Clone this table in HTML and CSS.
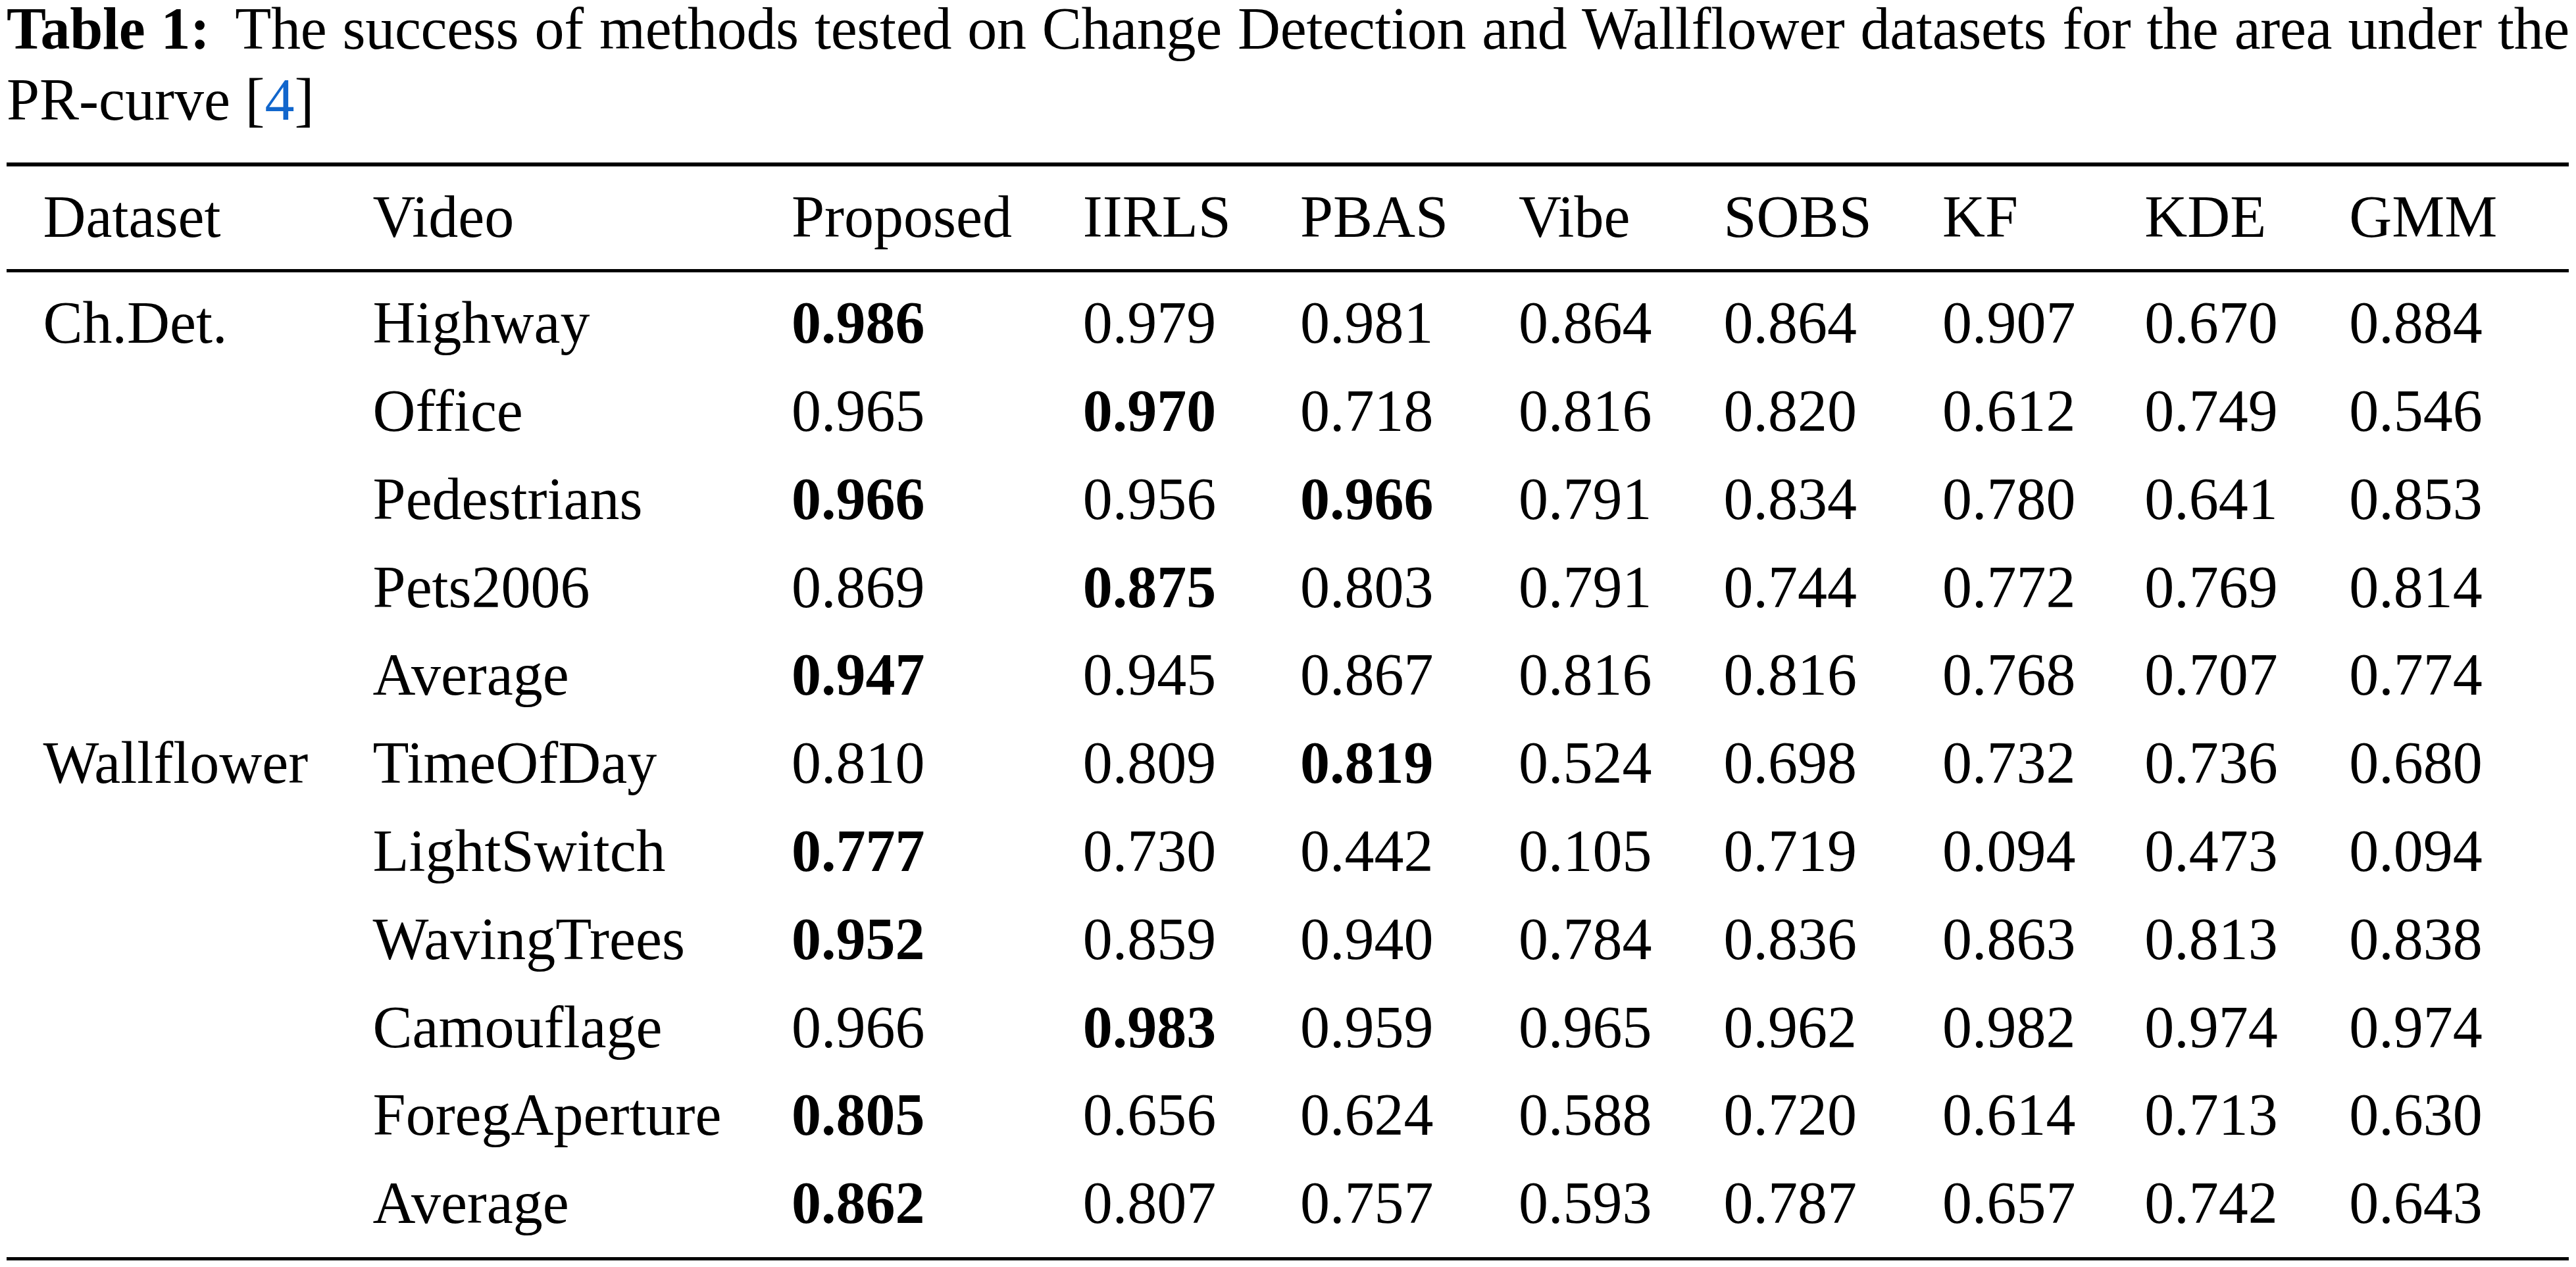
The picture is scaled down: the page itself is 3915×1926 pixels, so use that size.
FILE: index.html
```html
<!DOCTYPE html>
<html lang="en">
<head>
<meta charset="utf-8">
<title>Table 1</title>
<link rel="stylesheet" href="styles.css">
</head>
<body>
<div class="page">
  <p class="caption"><span class="line-full"><span class="label">Table 1:</span> The success of methods tested on Change Detection and Wallflower datasets for the area under the</span> PR-curve [<span class="cite">4</span>]</p>
  <table class="results">
    <colgroup>
      <col class="c1"><col class="c2"><col class="c3"><col class="c4"><col class="c5"><col class="c6"><col class="c7"><col class="c8"><col class="c9"><col class="c10">
    </colgroup>
    <thead>
      <tr>
        <th>Dataset</th><th>Video</th><th>Proposed</th><th>IIRLS</th><th>PBAS</th><th>Vibe</th><th>SOBS</th><th>KF</th><th>KDE</th><th>GMM</th>
      </tr>
    </thead>
    <tbody>
      <tr class="first"><td>Ch.Det.</td><td>Highway</td><td class="best">0.986</td><td>0.979</td><td>0.981</td><td>0.864</td><td>0.864</td><td>0.907</td><td>0.670</td><td>0.884</td></tr>
      <tr><td></td><td>Office</td><td>0.965</td><td class="best">0.970</td><td>0.718</td><td>0.816</td><td>0.820</td><td>0.612</td><td>0.749</td><td>0.546</td></tr>
      <tr><td></td><td>Pedestrians</td><td class="best">0.966</td><td>0.956</td><td class="best">0.966</td><td>0.791</td><td>0.834</td><td>0.780</td><td>0.641</td><td>0.853</td></tr>
      <tr><td></td><td>Pets2006</td><td>0.869</td><td class="best">0.875</td><td>0.803</td><td>0.791</td><td>0.744</td><td>0.772</td><td>0.769</td><td>0.814</td></tr>
      <tr><td></td><td>Average</td><td class="best">0.947</td><td>0.945</td><td>0.867</td><td>0.816</td><td>0.816</td><td>0.768</td><td>0.707</td><td>0.774</td></tr>
      <tr><td>Wallflower</td><td>TimeOfDay</td><td>0.810</td><td>0.809</td><td class="best">0.819</td><td>0.524</td><td>0.698</td><td>0.732</td><td>0.736</td><td>0.680</td></tr>
      <tr><td></td><td>LightSwitch</td><td class="best">0.777</td><td>0.730</td><td>0.442</td><td>0.105</td><td>0.719</td><td>0.094</td><td>0.473</td><td>0.094</td></tr>
      <tr><td></td><td>WavingTrees</td><td class="best">0.952</td><td>0.859</td><td>0.940</td><td>0.784</td><td>0.836</td><td>0.863</td><td>0.813</td><td>0.838</td></tr>
      <tr><td></td><td>Camouflage</td><td>0.966</td><td class="best">0.983</td><td>0.959</td><td>0.965</td><td>0.962</td><td>0.982</td><td>0.974</td><td>0.974</td></tr>
      <tr><td></td><td>ForegAperture</td><td class="best">0.805</td><td>0.656</td><td>0.624</td><td>0.588</td><td>0.720</td><td>0.614</td><td>0.713</td><td>0.630</td></tr>
      <tr class="last"><td></td><td>Average</td><td class="best">0.862</td><td>0.807</td><td>0.757</td><td>0.593</td><td>0.787</td><td>0.657</td><td>0.742</td><td>0.643</td></tr>
    </tbody>
  </table>
</div>
</body>
</html>
```
FILE: styles.css
```css
html, body {
  margin: 0;
  padding: 0;
  background: #ffffff;
}

body {
  font-family: "Liberation Serif", "Times New Roman", serif;
  font-size: 90px;
  color: #000000;
}

.page {
  width: 3895px;
  padding-left: 10px;
}

.caption {
  margin: -10.4px 0 0 0;
  line-height: 108px;
}

.line-full {
  display: block;
  text-align: justify;
  text-align-last: justify;
  word-spacing: -8px;
  letter-spacing: -0.3px;
}

.label {
  font-weight: bold;
  margin-right: 16px;
}

.cite {
  color: #1166cc;
}

.results {
  margin-top: 41.4px;
  width: 3894.4px;
  table-layout: fixed;
  border-collapse: separate;
  border-spacing: 0;
}

.c1 { width: 556.6px; }
.c2 { width: 636.4px; }
.c3 { width: 442.8px; }
.c4 { width: 330.2px; }
.c5 { width: 332px; }
.c6 { width: 311.6px; }
.c7 { width: 332.4px; }
.c8 { width: 307.4px; }
.c9 { width: 311px; }
.c10 { width: 334px; }

.results th,
.results td {
  padding: 0;
  line-height: 133.8px;
  text-align: left;
  font-weight: normal;
  white-space: nowrap;
  vertical-align: baseline;
  overflow: visible;
}

.results th:first-child,
.results td:first-child {
  padding-left: 55.6px;
}

.results th {
  border-top: 6px solid #000000;
  border-bottom: 5px solid #000000;
  padding-top: 10px;
  padding-bottom: 12px;
}

.results tr.first td {
  padding-top: 10.5px;
}

.results tr.last td {
  padding-bottom: 15px;
  border-bottom: 5px solid #000000;
}

.results td.best {
  font-weight: bold;
}
```
